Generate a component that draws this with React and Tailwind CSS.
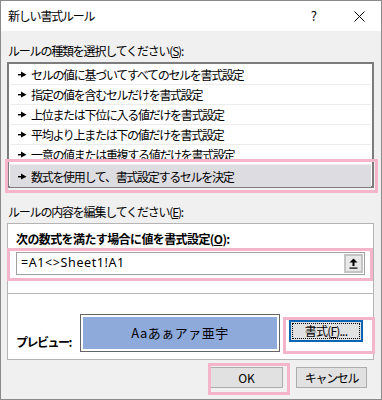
// 新しい書式ルール ダイアログ

const FONT = { fontFamily: '"Noto Sans CJK JP", "Noto Sans", sans-serif' };

const rules = [
  'セルの値に基づいてすべてのセルを書式設定',
  '指定の値を含むセルだけを書式設定',
  '上位または下位に入る値だけを書式設定',
  '平均より上または下の値だけを書式設定',
  '一意の値または重複する値だけを書式設定',
  '数式を使用して、書式設定するセルを決定',
];

function Pointer() {
  return (
    <svg width="9" height="7" viewBox="0 0 9 7" className="shrink-0">
      <rect x="0" y="3" width="4" height="1.4" fill="#000" />
      <polygon points="3,0.5 8.5,3.7 3,6.5" fill="#000" />
    </svg>
  );
}

function Pink({ className }) {
  return <div className={`absolute border-[3px] border-[#f4b4ca] pointer-events-none ${className}`} />;
}

export default function App() {
  return (
    <div
      className="relative w-[382px] h-[400px] bg-[#f0f0f0] border border-[#8a8a8a] text-[12px] text-black overflow-hidden"
      style={FONT}
    >
      {/* タイトルバー */}
      <div className="h-[30px] bg-white flex items-center pl-[7px] pr-[16px]">
        <span className="tracking-[-1.2px] text-[12px]">新しい書式ルール</span>
        <span className="ml-auto mr-[37px] text-[13px]">?</span>
        <svg width="11" height="11" viewBox="0 0 11 11">
          <path d="M0.5 0.5 L10.5 10.5 M10.5 0.5 L0.5 10.5" stroke="#000" strokeWidth="1" />
        </svg>
      </div>

      <div className="pl-[6px] pr-[7px]">
        <div className="pt-[12px] h-[28px] leading-[16px] pl-[1px] tracking-[-1.2px]">
          ルールの種類を選択してください(<span className="underline">S</span>):
        </div>

        {/* ルール一覧 */}
        <div className="mt-[3px] h-[126px] border-2 border-[#7c7c7c] bg-white pt-[1px]">
          {rules.map((r, i) => (
            <div
              key={i}
              className={`h-[20px] flex items-center gap-[4px] pl-[8px] mx-[1px] ${
                i === 5 ? 'bg-[#dddce1] h-[22px]' : 'border-b border-[#ececec]'
              }`}
            >
              <Pointer />
              <span className="tracking-[-1.3px] leading-[16px] pt-[1px]">{r}</span>
            </div>
          ))}
        </div>

        <div className="mt-[16px] h-[16px] leading-[16px] pl-[1px] tracking-[-1.2px]">
          ルールの内容を編集してください(<span className="underline">E</span>):
        </div>

        {/* ルール内容 */}
        <div className="mt-[3px] border border-[#b4b4b4] bg-white">
          <div className="pt-[7px] pb-[18px] px-[8px] border-b border-[#b4b4b4]">
            <div className="h-[16px] leading-[16px] font-bold tracking-[-0.6px]">
              次の数式を満たす場合に値を書式設定(<span className="underline">O</span>):
            </div>
            <div className="mt-[5px] h-[23px] border border-[#a0a0a0] flex items-center pl-[4px] pr-[1px]">
              <span className="text-[12.5px] tracking-[0.6px]" style={{ fontFamily: '"Noto Sans", sans-serif' }}>
                =A1&lt;&gt;Sheet1!A1
              </span>
              <div className="ml-auto w-[19px] h-[19px] bg-[#e8e8e8] border-2 border-[#c4c4c4] flex items-center justify-center">
                <svg width="9" height="11" viewBox="0 0 9 11">
                  <polygon points="4.5,0.5 8.5,4.5 0.5,4.5" fill="#000" />
                  <rect x="3.5" y="4" width="2" height="4" fill="#000" />
                  <rect x="0.5" y="9.5" width="8" height="1.2" fill="#000" />
                </svg>
              </div>
            </div>
          </div>

          <div className="h-[65px] flex items-start pl-[8px] pt-[20px]">
            <div className="w-[64px] mt-[20px] font-bold tracking-[-1.5px] leading-[16px]">プレビュー:</div>
            <div className="w-[200px] h-[38px] border border-[#646464] p-[2px] bg-white">
              <div className="h-full bg-[#8eaadb] flex items-center justify-center text-[13px] tracking-[0.5px]">
                Aaあぁアァ亜宇
              </div>
            </div>
            <button className="ml-[9px] mt-[6px] w-[74px] h-[22px] bg-[#e1e1e1] border-2 border-[#0a64b4] p-[1px]">
              <div className="h-full border border-dotted border-black flex items-center justify-center tracking-[-0.8px] leading-none">
                書式(<span className="underline">F</span>)...
              </div>
            </button>
          </div>
        </div>

        {/* ボタン */}
        <div className="mt-[7px] flex justify-end gap-[13px] pr-[7px]">
          <button className="w-[73px] h-[21px] bg-[#e1e1e1] border border-[#adadad] leading-none">OK</button>
          <button className="w-[71px] h-[21px] bg-[#e1e1e1] border border-[#adadad] leading-none tracking-[-1.3px]">
            キャンセル
          </button>
        </div>
      </div>

      {/* 強調枠 */}
      <Pink className="left-[4px] top-[158px] w-[373px] h-[34px]" />
      <Pink className="left-[6px] top-[247px] w-[366px] h-[33px]" />
      <Pink className="left-[282px] top-[316px] w-[92px] h-[37px]" />
      <Pink className="left-[207px] top-[362px] w-[82px] h-[32px]" />
    </div>
  );
}
